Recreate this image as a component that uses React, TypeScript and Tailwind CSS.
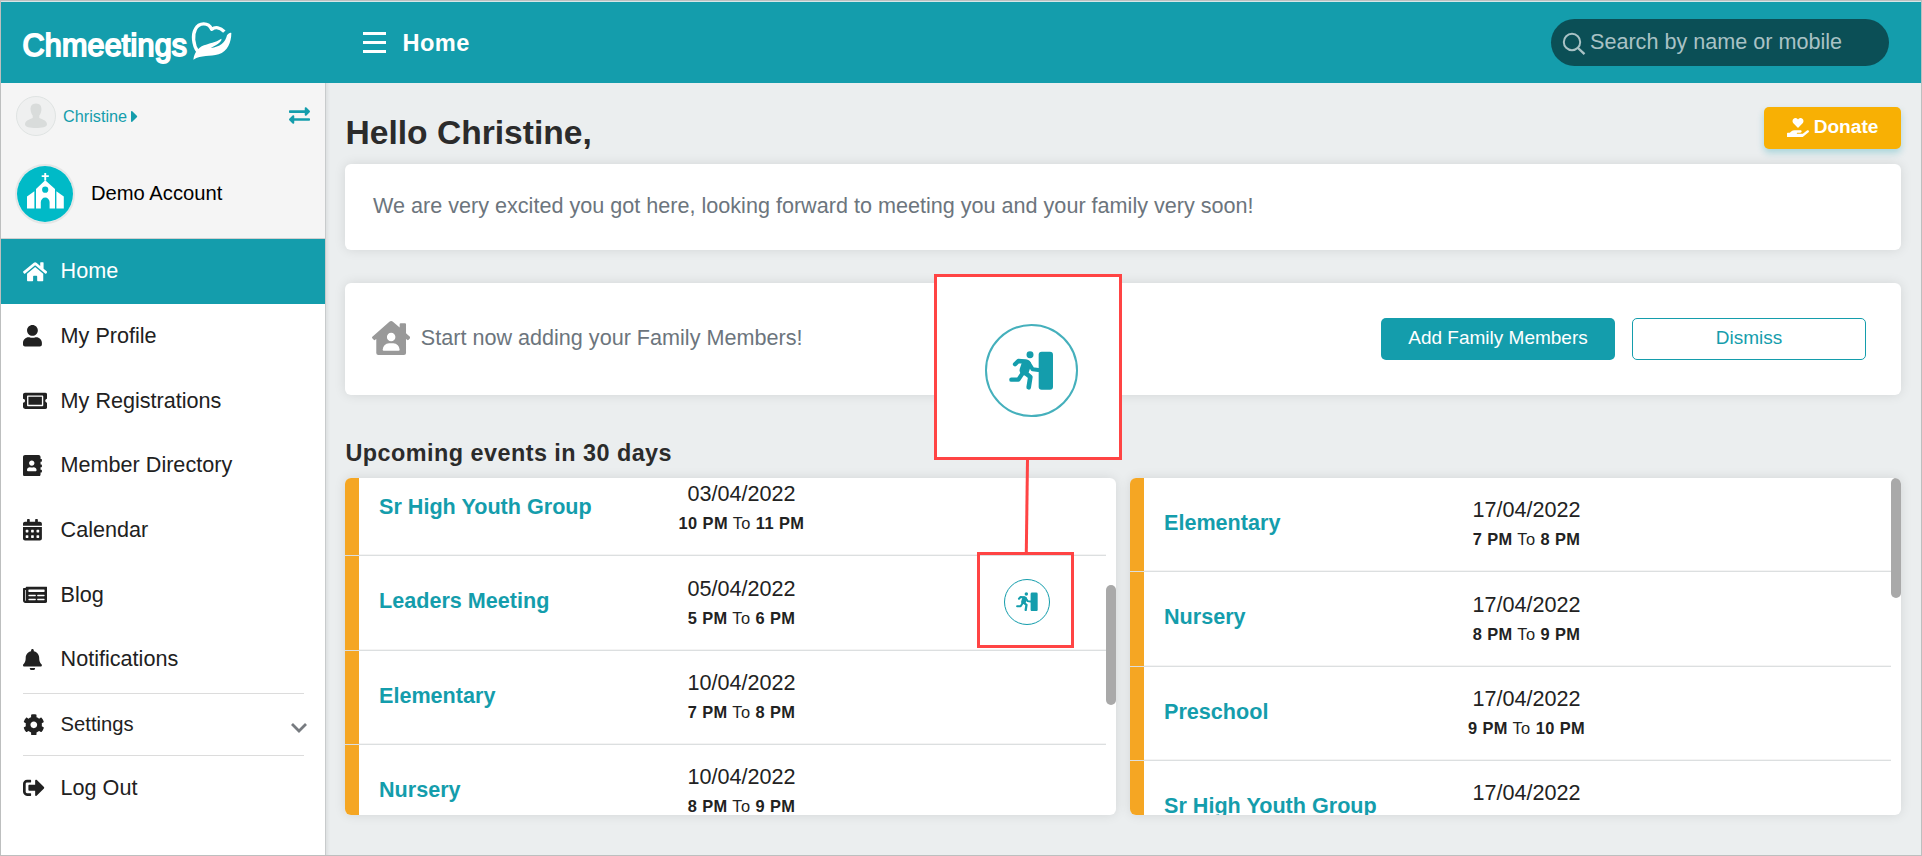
import React from "react";
import type { IconType } from "react-icons";
import {
  FaAddressBook,
  FaBell,
  FaCalendarAlt,
  FaCaretRight,
  FaCog,
  FaExchangeAlt,
  FaHandHoldingHeart,
  FaHome,
  FaHouseUser,
  FaNewspaper,
  FaSignOutAlt,
  FaTicketAlt,
  FaUser,
} from "react-icons/fa";

type MeetingEvent = { title: string; date: string; from: string; to: string; checkIn?: boolean };

const navItems: { label: string; icon: IconType; wide?: boolean }[] = [
  { label: "Home", icon: FaHome, wide: true },
  { label: "My Profile", icon: FaUser },
  { label: "My Registrations", icon: FaTicketAlt, wide: true },
  { label: "Member Directory", icon: FaAddressBook },
  { label: "Calendar", icon: FaCalendarAlt },
  { label: "Blog", icon: FaNewspaper, wide: true },
  { label: "Notifications", icon: FaBell },
];

const leftEvents: MeetingEvent[] = [
  { title: "Sr High Youth Group", date: "03/04/2022", from: "10 PM", to: "11 PM" },
  { title: "Leaders Meeting", date: "05/04/2022", from: "5 PM", to: "6 PM", checkIn: true },
  { title: "Elementary", date: "10/04/2022", from: "7 PM", to: "8 PM" },
  { title: "Nursery", date: "10/04/2022", from: "8 PM", to: "9 PM" },
];

const rightEvents: MeetingEvent[] = [
  { title: "Elementary", date: "17/04/2022", from: "7 PM", to: "8 PM" },
  { title: "Nursery", date: "17/04/2022", from: "8 PM", to: "9 PM" },
  { title: "Preschool", date: "17/04/2022", from: "9 PM", to: "10 PM" },
  { title: "Sr High Youth Group", date: "17/04/2022", from: "10 PM", to: "11 PM" },
];

function HeartHand() {
  return (
    <svg viewBox="0 0 162 162" className="h-[54px] w-[54px] shrink-0" fill="none">
      <path d="M35 112C21 92 19 62 28 46C39 25 67 24 77 46C88 38 103 40 115 53" stroke="#fff" strokeWidth="10" strokeLinejoin="round" />
      <path
        d="M22 137C25 118 34 102 54 94C70 87 88 86 106 74C109 80 98 90 74 102C102 99 118 86 123 64C127 58 133 55 136 57C136 84 125 112 98 121C72 129 46 122 22 137Z"
        fill="#fff"
      />
    </svg>
  );
}

function Church() {
  return (
    <svg viewBox="0 0 37 36" className="h-9 w-[37px]">
      <g fill="#fff">
        <path d="M17.3 0H19.2V2.3H21.8V4.1H19.2V7.6H17.3V4.1H14.7V2.3H17.3Z" />
        <path
          fillRule="evenodd"
          d="M18.2 7.2L28 16V35.6H22.6V29A4.4 4.4 0 0 0 13.8 29V35.6H9V16ZM18.2 13.6A3.1 3.1 0 1 0 18.2 19.8A3.1 3.1 0 1 0 18.2 13.6Z"
        />
        <path d="M7.4 18.2V35.6H0V23.5Z" />
        <path d="M29.4 18.2L36.8 23.5V35.6H29.4Z" />
        <path d="M16.2 35.6V29.5A2 2 0 0 1 20.2 29.5V35.6Z" fill="#00bac7" />
      </g>
    </svg>
  );
}

function Avatar() {
  return (
    <svg viewBox="0 0 40 40" className="h-10 w-10 shrink-0">
      <circle cx="20" cy="20" r="19.5" fill="#eff0f0" stroke="#dfe3e2" />
      <path
        d="M20 7.5C24 7.5 25.8 10.3 25.4 14C25.1 17 24 18.6 23.3 19.6V21.9C26.5 23.6 31 24 31 28.5C31 31 26 32 20 32C14 32 9 31 9 28.5C9 24 13.5 23.6 16.7 21.9V19.6C16 18.6 14.9 17 14.6 14C14.2 10.3 16 7.5 20 7.5Z"
        fill="#d9dcdb"
      />
    </svg>
  );
}

function RunToDoor({ className }: { className: string }) {
  return (
    <svg viewBox="14 26 134 118" className={className} fill="none" stroke="#149dac" strokeLinecap="round" strokeLinejoin="round">
      <circle cx="77" cy="37" r="10.5" fill="#149dac" stroke="none" />
      <rect x="103" y="28" width="43" height="114" rx="9" fill="#149dac" stroke="none" />
      <path d="M32 66L42 56L62 57" strokeWidth="13" />
      <path d="M66 66L60 84" strokeWidth="29" />
      <path d="M74 64L85 81L102 83" strokeWidth="12" />
      <path d="M62 91L78 104L73 135" strokeWidth="14" />
      <path d="M21 112L42 112L52 97" strokeWidth="13" />
    </svg>
  );
}

function EventList({ events, scrolled }: { events: MeetingEvent[]; scrolled?: boolean }) {
  return (
    <section className="flex h-[337px] w-[771px] overflow-hidden rounded-md bg-white shadow-[0_0_12px_rgba(0,0,0,0.1)]">
      <div className={scrolled ? "-mt-4 flex-1" : "flex-1"}>
        {events.map((e) => (
          <div
            key={e.title}
            className="grid h-[94.4px] grid-cols-[14px_240px_285px_1fr] border-b border-[#dcdfe0] shadow-[inset_0_-1px_0_#f4f4f4]"
          >
            <div className="bg-[#f5a623]" />
            <div className="flex items-center whitespace-nowrap pb-[3px] pl-5 text-[21.6px] font-bold text-[#149dac]">{e.title}</div>
            <div className="flex flex-col items-center justify-center pb-[2px] text-[#222]">
              <div className="text-[21.6px] leading-8">{e.date}</div>
              <div className="-mt-px text-[16.4px] leading-7 tracking-[0.42px]">
                <b>{e.from}</b> To <b>{e.to}</b>
              </div>
            </div>
            <div className="flex items-center pb-[3px] pl-[120px]">
              {e.checkIn && (
                <div className="flex h-[46px] w-[46px] items-center justify-center rounded-full border border-[#149dac] bg-white">
                  <RunToDoor className="h-[19.6px] w-[22px]" />
                </div>
              )}
            </div>
          </div>
        ))}
      </div>
      <div className="w-[10px]">
        <div className={scrolled ? "mt-[107px] h-[120px] rounded-full bg-[#a9a9a9]" : "h-[120px] rounded-full bg-[#a9a9a9]"} />
      </div>
    </section>
  );
}

function Sidebar() {
  return (
    <aside className="flex w-[325px] shrink-0 flex-col border-r border-[#c8cbcc] bg-white text-[21.6px] text-[#212121]">
      <div className="h-[156px] border-b border-[#d0d0d0] bg-[#f5f5f5] pl-[14px] pr-[15px] pt-[13px]">
        <div className="flex items-center pl-px">
          <Avatar />
          <span className="ml-[7px] mt-px text-[16.25px] text-[#149dac]">Christine</span>
          <FaCaretRight className="ml-1 h-[19px] w-[7.1px] text-[#149dac]" />
          <FaExchangeAlt className="mb-[2px] ml-auto h-[21px] w-[21px] text-[#149dac]" />
        </div>
        <div className="mt-7 flex items-center gap-4">
          <div className="flex h-[60px] w-[60px] items-center justify-center rounded-full border-2 border-[#e4e6e6] bg-white">
            <div className="flex h-14 w-14 items-center justify-center rounded-full bg-[#00bac7] pb-[7px]">
              <Church />
            </div>
          </div>
          <span className="pb-px text-[20.2px] text-black">Demo Account</span>
        </div>
      </div>
      <nav>
        {navItems.map(({ label, icon: Icon, wide }) => (
          <a
            key={label}
            className={
              label === "Home"
                ? "flex h-[64.7px] items-center bg-[#149dac] pl-[22px] text-white"
                : "flex h-[64.7px] items-center pl-[22px]"
            }
          >
            <span className="w-[37.6px]">
              <Icon className={wide ? "h-[21.6px] w-[24.3px]" : "h-[21.6px] w-[18.9px]"} />
            </span>
            {label}
          </a>
        ))}
        <div className="ml-[22px] mr-[21px] mt-px flex h-[63px] items-center border-y border-[#dcdcdc] text-[20.2px]">
          <span className="w-[37.6px]">
            <FaCog className="h-[21.6px] w-[21.6px]" />
          </span>
          Settings
          <svg viewBox="0 0 18 12" className="-mr-[4px] ml-auto mt-2 h-3 w-[18px]" fill="none" stroke="#777b80" strokeWidth="2.8">
            <path d="M2 2L9 9L16 2" />
          </svg>
        </div>
        <a className="flex h-[64.7px] items-center pl-[22px]">
          <span className="w-[37.6px]">
            <FaSignOutAlt className="h-[21.6px] w-[21.6px]" />
          </span>
          Log Out
        </a>
      </nav>
    </aside>
  );
}

export default function App() {
  return (
    <div className="relative flex h-[856px] w-[1922px] flex-col overflow-hidden border border-[#bdbfbf] bg-[#ebeeef] font-['Liberation_Sans',Arial,sans-serif]">
      <header className="flex h-[82px] shrink-0 items-center border-t border-[#d5e6e8] bg-[#149dac] pr-8 text-white">
        <div className="flex w-[362px] items-center pl-[21.5px]">
          <span className="mt-[5px] w-[165px] whitespace-nowrap text-[30.5px] leading-none tracking-[0.2px] [-webkit-text-stroke:1.8px_#fff]">
            Chmeetings
          </span>
          <div className="ml-[-1.5px] mt-[-3px]">
            <HeartHand />
          </div>
        </div>
        <div className="flex h-[21px] w-[23px] flex-col justify-between">
          <span className="h-[3px] bg-white" />
          <span className="h-[3px] bg-white" />
          <span className="h-[3px] bg-white" />
        </div>
        <h2 className="ml-[16.5px] mt-[2px] text-[23.6px] font-bold tracking-[0.4px]">Home</h2>
        <div className="ml-auto flex h-[47px] w-[338px] items-center rounded-full bg-[#0b4f56] pl-[11px] text-[21.6px] text-[#a9c2c5]">
          <svg viewBox="0 0 24 24" className="mt-[3px] h-6 w-6" fill="none" stroke="#a9c2c5" strokeWidth="2">
            <circle cx="10" cy="10" r="8.2" />
            <path d="M16 16L22.5 22.2" strokeWidth="2.4" />
          </svg>
          <span className="ml-1">Search by name or mobile</span>
        </div>
      </header>

      <div className="flex flex-1">
        <Sidebar />
        <main className="flex-1 pl-[19px] pr-5 shadow-[inset_4px_0_3px_-2px_rgba(0,0,0,0.06)]">
          <div className="flex h-[81px] items-start justify-between">
            <h1 className="ml-[0.5px] mt-[30px] text-[33.6px] font-bold leading-10 text-[#2b2b2b]">Hello Christine,</h1>
            <button className="mt-6 flex h-[42px] w-[137px] items-center justify-center gap-[5px] rounded-[5px] bg-[#f8b004] pb-px text-[19.1px] font-bold text-white shadow-[0_4px_7px_rgba(20,157,172,0.3)]">
              <FaHandHoldingHeart className="h-[19.5px] w-[22px]" />
              Donate
            </button>
          </div>

          <section className="flex h-[86px] items-center rounded-md bg-white pb-px pl-7 text-[21.6px] text-[#6c757d] shadow-[0_0_12px_rgba(0,0,0,0.1)]">
            We are very excited you got here, looking forward to meeting you and your family very soon!
          </section>

          <section className="mt-[33px] flex h-28 items-center rounded-md bg-white pl-[27px] pr-[35px] text-[21.6px] text-[#6c757d] shadow-[0_0_12px_rgba(0,0,0,0.1)]">
            <FaHouseUser className="mb-[2px] h-[34px] w-[38.3px] text-[#999]" />
            <span className="mb-px ml-[10.5px]">Start now adding your Family Members!</span>
            <button className="ml-auto h-[42px] w-[234px] rounded-[5px] bg-[#149dac] pb-px text-[19px] text-white">Add Family Members</button>
            <button className="ml-[17px] h-[42px] w-[234px] rounded-[5px] border border-[#149dac] pb-px text-[19px] text-[#149dac]">Dismiss</button>
          </section>

          <h3 className="mb-[10px] ml-[0.5px] mt-[43px] text-[23.4px] font-bold leading-[30px] tracking-[0.46px] text-[#2b2b2b]">
            Upcoming events in 30 days
          </h3>

          <div className="flex justify-between">
            <EventList events={leftEvents} scrolled />
            <EventList events={rightEvents} />
          </div>
        </main>
      </div>

      {/* Callout that magnifies the check-in button */}
      <div className="absolute left-[933px] top-[273px] flex h-[186px] w-[188px] items-center justify-center border-[3px] border-[#ff4444] bg-white pt-[7px]">
        <div className="ml-[6px] flex h-[93px] w-[93px] items-center justify-center rounded-full border-2 border-[#45b0bc]">
          <RunToDoor className="h-[39.3px] w-[44.7px]" />
        </div>
      </div>
      <svg className="absolute left-[1020px] top-[459px] h-[93px] w-3" viewBox="0 0 12 93">
        <path d="M6.5 0L5.3 93" stroke="#ff4444" strokeWidth="3" />
      </svg>
      <div className="absolute left-[976px] top-[551px] h-24 w-[97px] border-[3px] border-[#ff4444]" />
    </div>
  );
}
